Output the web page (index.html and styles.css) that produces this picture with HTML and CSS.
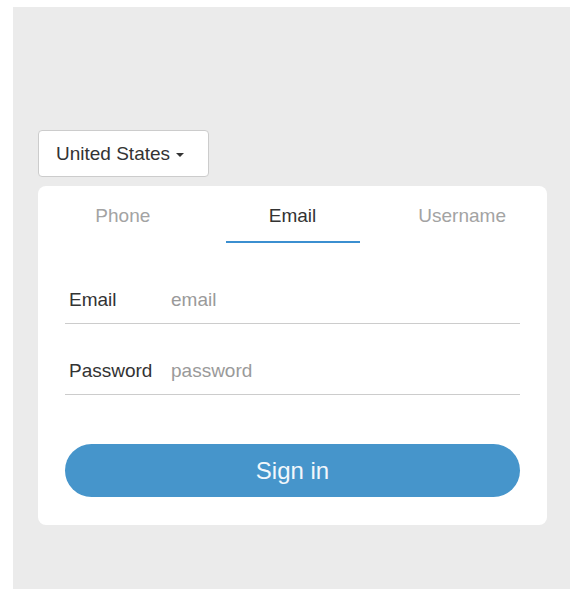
FILE: index.html
```html
<!DOCTYPE html>
<html lang="en">
<head>
    <meta charset="UTF-8">
    <meta name="viewport" content="width=device-width, initial-scale=1.0">
    <title>Sign in</title>
    <link rel="stylesheet" href="styles.css">
</head>
<body>
    <div class="panel">
        <button type="button" class="country">United States <span class="caret"></span></button>

        <form class="card" action="#" method="post">
            <div class="tabs">
                <div class="tab">Phone</div>
                <div class="tab active">Email</div>
                <div class="tab">Username</div>
            </div>

            <div class="fields">
                <div class="field">
                    <label for="email">Email</label>
                    <input type="text" id="email" name="email" placeholder="email">
                </div>

                <div class="field">
                    <label for="password">Password</label>
                    <input type="password" id="password" name="password" placeholder="password">
                </div>
            </div>

            <button type="submit" class="signin">Sign in</button>
        </form>
    </div>
</body>
</html>
```

FILE: styles.css
```css
body {
    margin: 0;
    background: #fff;
    font-family: 'Liberation Sans', Arial, sans-serif;
    color: #333;
}

.panel {
    margin: 7px 6px 4px 13px;
    height: 582px;
    box-sizing: border-box;
    background: #ebebeb;
    padding: 123px 23px 0 25px;
}

.country {
    display: flex;
    align-items: center;
    height: 47px;
    width: 171px;
    padding: 0 0 0 17px;
    box-sizing: border-box;
    background: #fff;
    border: 1px solid #ccc;
    border-radius: 4px;
    font-family: inherit;
    font-size: 19px;
    color: #333;
}

.caret {
    margin-left: 6px;
    margin-top: 2px;
    width: 0;
    height: 0;
    border-left: 4px solid transparent;
    border-right: 4px solid transparent;
    border-top: 4px solid #333;
}

.card {
    margin-top: 9px;
    background: #fff;
    border-radius: 8px;
    padding: 0 27px 28px;
}

.tabs {
    display: grid;
    grid-template-columns: repeat(3, 1fr);
    margin: 0 -27px;
}

.tab {
    height: 57px;
    box-sizing: border-box;
    padding-top: 19px;
    text-align: center;
    font-size: 19px;
    color: #a3a3a3;
    position: relative;
}

.tab.active {
    color: #333;
}

.tab.active::after {
    content: '';
    position: absolute;
    left: 18px;
    right: 17px;
    bottom: 0;
    height: 2px;
    background: #3b8fd0;
}

.fields {
    display: flex;
    flex-direction: column;
    gap: 23px;
    margin-top: 33px;
}

.field {
    display: flex;
    align-items: center;
    height: 47px;
    border-bottom: 1px solid #ccc;
}

.field label {
    width: 102px;
    padding-left: 4px;
    font-size: 19px;
    color: #333;
}

.field input {
    flex: 1;
    border: none;
    outline: 0;
    padding: 0;
    font-family: inherit;
    font-size: 19px;
    color: #333;
}

.field input::placeholder {
    color: #9a9a9a;
}

.signin {
    display: block;
    width: 100%;
    height: 53px;
    margin-top: 49px;
    border: none;
    border-radius: 27px;
    background: #4695cb;
    color: #f2f7fb;
    font-family: inherit;
    font-size: 24px;
}
```
